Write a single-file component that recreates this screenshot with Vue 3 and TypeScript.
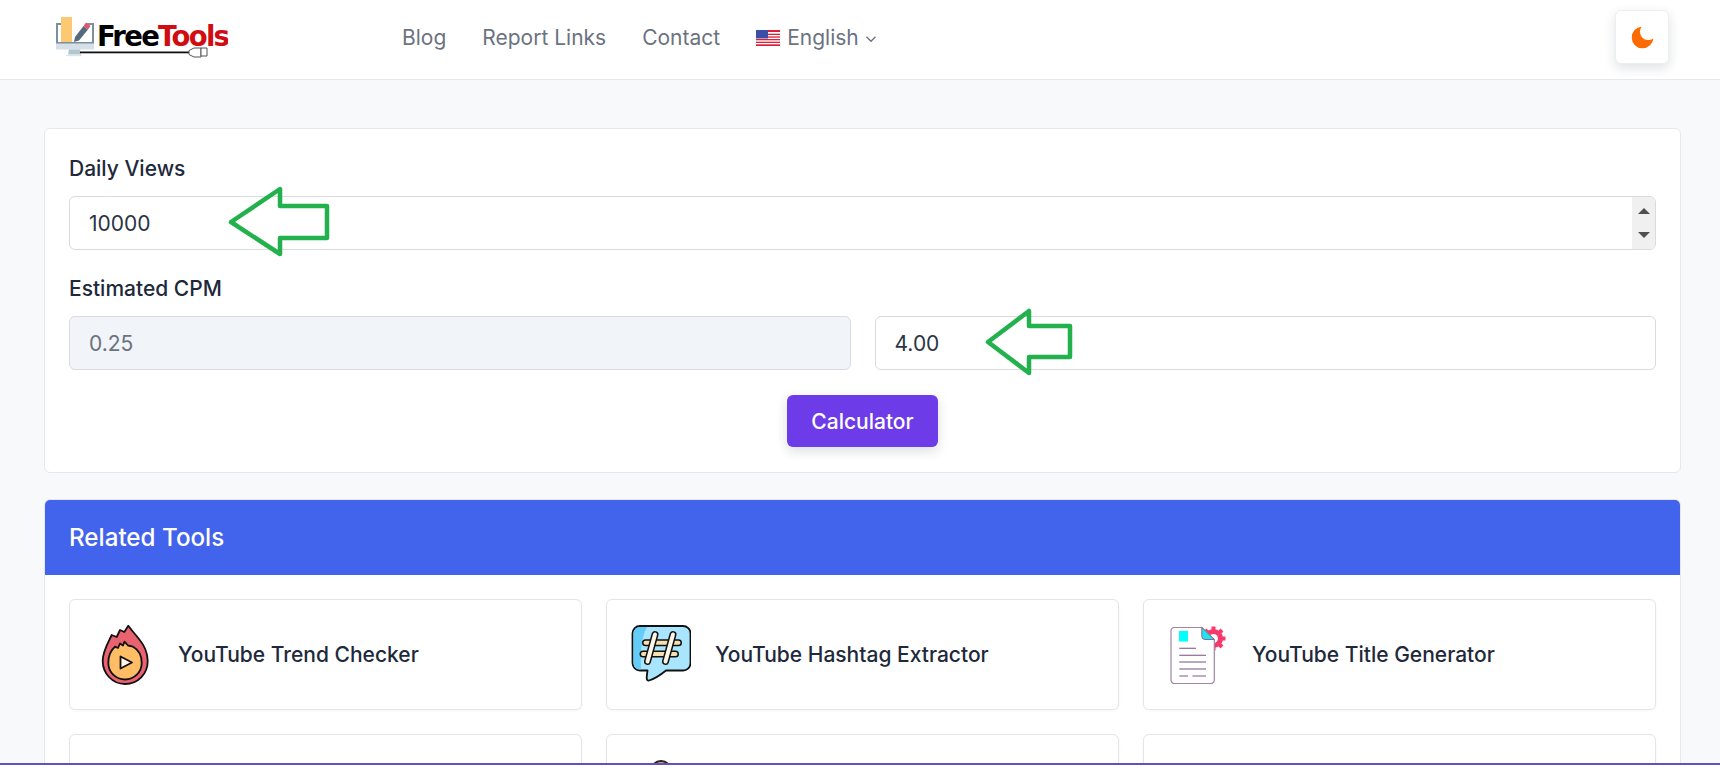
<script setup lang="ts">
const navLinks: string[] = ['Blog', 'Report Links', 'Contact']
</script>

<template>
  <div class="page">
    <header class="topbar">
      <a class="logo" aria-label="FreeTools">
        <svg width="172" height="50" viewBox="0 0 172 50">
          <!-- ruler -->
          <rect x="5" y="6" width="11" height="26" fill="#fdc872" />
          <!-- monitor -->
          <path d="M5 13H1V32H37V13H31" fill="none" stroke="#7c8f9f" stroke-width="2" />
          <rect x="0" y="32.500" width="38" height="6" fill="#d5e0e8" />
          <path d="M13 38.500h11l1 5H12z" fill="#b3c6cf" />
          <rect x="10" y="44" width="16" height="1.200" fill="#dbe4e9" />
          <!-- pencil -->
          <path d="M27.500 15l4.500 3.500-9 11-5 1.500 1-5z" fill="#566a7e" />
          <path d="M27.500 15l2.500-3.500 4.500 3.500-2.500 3.500z" fill="#e2566b" />
          <!-- wordmark -->
          <text x="41" y="35" class="word"><tspan fill="#000">Free</tspan><tspan fill="#d00d12">Tools</tspan></text>
          <!-- cable and plug -->
          <rect x="24" y="40.500" width="110" height="1.800" fill="#111" />
          <path d="M133 39.500l5-2.500h7v9h-7l-5-2.500z" fill="#fff" stroke="#555" stroke-width="1" />
          <path d="M145 37h6v8h-6z" fill="#fff" stroke="#555" stroke-width="1" />
        </svg>
      </a>

      <nav class="nav">
        <a v-for="link in navLinks" :key="link" class="nav-link">{{ link }}</a>
        <a class="nav-link lang">
          <svg class="flag" width="24" height="16" viewBox="0 0 24 16">
            <rect width="24" height="16" fill="#fff" />
            <g fill="#d9203a">
              <rect y="0" width="24" height="2" />
              <rect y="3.700" width="24" height="1.300" />
              <rect y="6.400" width="24" height="1.300" />
              <rect y="9" width="24" height="1.300" />
              <rect y="11.700" width="24" height="1.300" />
              <rect y="14.300" width="24" height="1.700" />
            </g>
            <rect width="12" height="8.500" fill="#3c4fa8" />
          </svg>
          <span>English</span>
          <svg class="chevron" width="12" height="8" viewBox="0 0 12 8">
            <path d="M1.500 1.800L6 6.200l4.500-4.400" fill="none" stroke="#6b7280" stroke-width="1.400" />
          </svg>
        </a>
      </nav>

      <button class="theme-btn" type="button" aria-label="Toggle theme">
        <svg width="29" height="29" viewBox="0 0 24 24">
          <path d="M21 12.790A9 9 0 1 1 11.210 3 7 7 0 0 0 21 12.790z" fill="#ff6a00" />
        </svg>
      </button>
    </header>

    <main class="content">
      <section class="card form-card">
        <label class="field-label">Daily Views</label>
        <div class="input-wrap">
          <input class="input" type="text" value="10000" readonly />
          <div class="spinner">
            <i class="tri up"></i>
            <i class="tri down"></i>
          </div>
          <svg class="arrow arrow-one" width="104" height="72" viewBox="0 0 104 72">
            <path d="M4 36L53 3V20H100V52H53V68z" />
          </svg>
        </div>

        <label class="field-label second">Estimated CPM</label>
        <div class="cpm-row">
          <input class="input disabled" type="text" value="0.25" disabled />
          <div class="input-wrap">
            <input class="input" type="text" value="4.00" readonly />
            <svg class="arrow arrow-two" width="90" height="68" viewBox="0 0 90 68">
              <path d="M4 34L45 3V18H86V49H45V65z" />
            </svg>
          </div>
        </div>

        <div class="actions">
          <button class="calc-btn" type="button">Calculator</button>
        </div>
      </section>

      <section class="card related">
        <div class="related-head">Related Tools</div>
        <div class="tools">
          <a class="tool">
            <svg class="tool-icon" viewBox="0 0 60 60">
              <path d="M31 59C18 59 8.700 48 8.700 36 8.700 26 14 18 17.700 10L22.700 12 26 5 30.300 7 34.300 .8C38 6 42 10 45 14 50 20 53.700 28 53.700 36 53.700 49 44 59 31 59z" fill="#e8636f" stroke="#111" stroke-width="1.800" stroke-linejoin="round" />
              <path d="M14.300 38C14.300 30 17 25 21 21.700L24 23 26 18.500 29 20.500 30.500 16.700 34 20.500 39 21.700C45 25 47.700 31 47.700 38A16.700 16.500 0 0 1 14.300 38z" fill="#ffbd66" stroke="#111" stroke-width="1.800" stroke-linejoin="round" />
              <path d="M26.500 31.500L38 37.500 26.500 43.500z" fill="#fff7ea" stroke="#111" stroke-width="1.800" stroke-linejoin="round" />
            </svg>
            <span>YouTube Trend Checker</span>
          </a>
          <a class="tool">
            <svg class="tool-icon" viewBox="0 0 60 60">
              <path d="M9 1H52A7.500 7.500 0 0 1 59.500 8.500V38A7.500 7.500 0 0 1 52 45.500H35C30 49.500 24 54 18 55.500 15 56 15.500 52 16.500 45.500H9A7.500 7.500 0 0 1 1.500 38V8.500A7.500 7.500 0 0 1 9 1z" fill="#a9e5ff" stroke="#111" stroke-width="1.800" stroke-linejoin="round" />
              <path d="M9.500 2H16C11 10 9 26 10 44.500H9A6.500 6.500 0 0 1 2.500 38V8.500A6.500 6.500 0 0 1 9.500 2z" fill="#63cdf8" />
              <g stroke-linecap="round" fill="none">
                <path d="M14.500 17.700H47.500M12 29H44.500" stroke="#111" stroke-width="7" />
                <path d="M14.500 17.700H47.500M12 29H44.500" stroke="#f7dfb0" stroke-width="4" />
                <path d="M24 9.500L16.500 36.500M42 9.500L34.500 36.500" stroke="#111" stroke-width="7" />
                <path d="M24 9.500L16.500 36.500M42 9.500L34.500 36.500" stroke="#fff6e6" stroke-width="4" />
              </g>
            </svg>
            <span>YouTube Hashtag Extractor</span>
          </a>
          <a class="tool">
            <svg class="tool-icon" viewBox="0 0 60 60">
              <g fill="#f8396b">
                <circle cx="45.500" cy="13.500" r="9.500" />
                <g stroke="#f8396b" stroke-width="4">
                  <path d="M45.500 1.500V25.500M33.500 13.500H57.500M37 5L54 22M54 5L37 22" />
                </g>
              </g>
              <circle cx="45.500" cy="13.500" r="4.500" fill="#fff" />
              <path d="M6 2.500H33.800L46.300 14.500V55A3.500 3.500 0 0 1 42.800 58.500H6.500A3.500 3.500 0 0 1 3 55V5.500A3 3 0 0 1 6 2.500z" fill="#fff" stroke="#a184a8" stroke-width="1.200" />
              <path d="M33.800 2.500L46.300 14.500H37A3.200 3.200 0 0 1 33.800 11.300z" fill="#19e6ee" stroke="#8a6a90" stroke-width="1" />
              <rect x="11" y="6" width="9" height="10.500" fill="#00ffff" />
              <g stroke="#75507e" stroke-width="1.100">
                <path d="M11.300 23.300H28M11.300 30.300H38M11.300 37H38M11.300 44H38" />
                <path d="M11.300 51H20M24.500 51H38" stroke="#ad8fb3" stroke-width="1.400" />
              </g>
            </svg>
            <span>YouTube Title Generator</span>
          </a>
          <a class="tool">
            <span class="icon-slot"></span>
          </a>
          <a class="tool">
            <span class="icon-slot"><i class="peek-round"></i></span>
          </a>
          <a class="tool">
            <span class="icon-slot"><i class="peek-flat"></i></span>
          </a>
        </div>
      </section>
    </main>
  </div>
</template>

<style scoped>
.page {
  height: 772px;
  overflow: hidden;
  background: #fff;
  font-family: Inter, "Liberation Sans", sans-serif;
  color: #1e293b;
}

.topbar {
  height: 79px;
  box-sizing: content-box;
  display: flex;
  align-items: center;
  padding: 0 51px 0 56px;
  background: #fff;
  border-bottom: 1px solid #e6e8ec;
}

.logo {
  display: block;
  width: 172px;
  height: 50px;
  margin-top: -7px;
}

.word {
  font-family: "DejaVu Sans", sans-serif;
  font-weight: 700;
  font-size: 27.500px;
  letter-spacing: -1.700px;
}

.nav {
  display: flex;
  align-items: center;
  gap: 36px;
  margin-left: 174px;
  margin-top: -4px;
}

.nav-link {
  font-size: 21px;
  color: #6b7280;
}

.lang {
  display: flex;
  align-items: center;
}

.flag {
  margin-right: 7px;
}

.chevron {
  margin-left: 6px;
  margin-top: 3px;
}

.theme-btn {
  width: 54px;
  height: 54px;
  margin-left: auto;
  margin-top: -5px;
  display: flex;
  align-items: center;
  justify-content: center;
  padding: 0;
  background: #fff;
  border: 1px solid #eceef1;
  border-radius: 6px;
  box-shadow: 0 4px 12px rgba(30, 41, 59, 0.14);
}

.content {
  height: 685px;
  box-sizing: border-box;
  padding: 48px 39px 0 44px;
  background: #f8f9fb;
  border-bottom: 2px solid #6251c4;
  overflow: hidden;
}

.card {
  background: #fff;
  border: 1px solid #e6e8ec;
  border-radius: 6px;
}

.form-card {
  height: 345px;
  box-sizing: border-box;
  padding: 24px 24px 0;
}

.field-label {
  display: block;
  height: 32px;
  line-height: 32px;
  margin-bottom: 11px;
  font-size: 21px;
  font-weight: 500;
}

.field-label.second {
  margin-top: 23px;
}

.input-wrap {
  position: relative;
}

.input {
  display: block;
  width: 100%;
  height: 54px;
  box-sizing: border-box;
  padding: 0 19px;
  font: 400 21px Inter, "Liberation Sans", sans-serif;
  color: #2b3445;
  background: #fff;
  border: 1px solid #d9dbdf;
  border-radius: 6px;
  outline: none;
}

.input.disabled {
  color: #6b7280;
  background: #f1f4f9;
}

.spinner {
  position: absolute;
  top: 1px;
  right: 1px;
  bottom: 1px;
  width: 23px;
  display: flex;
  flex-direction: column;
  align-items: center;
  justify-content: center;
  gap: 18px;
  background: #f0f0f0;
  border-radius: 0 5px 5px 0;
}

.tri {
  width: 0;
  height: 0;
  border-left: 6px solid transparent;
  border-right: 6px solid transparent;
}

.tri.up {
  border-bottom: 6px solid #505050;
}

.tri.down {
  border-top: 6px solid #505050;
}

.arrow {
  position: absolute;
  overflow: visible;
}

.arrow path {
  fill: none;
  stroke: #22b14c;
  stroke-width: 4.500;
  stroke-linejoin: round;
}

.arrow-one {
  left: 158px;
  top: -10px;
}

.arrow-two {
  left: 109px;
  top: -8px;
}

.cpm-row {
  display: grid;
  grid-template-columns: 1fr 1fr;
  gap: 24px;
}

.actions {
  display: flex;
  justify-content: center;
  margin-top: 25px;
}

.calc-btn {
  width: 151px;
  height: 52px;
  font: 500 21px Inter, "Liberation Sans", sans-serif;
  color: #fff;
  background: #6d3be8;
  border: none;
  border-radius: 6px;
  box-shadow: 0 4px 12px rgba(30, 41, 59, 0.16);
}

.related {
  margin-top: 26px;
  overflow: hidden;
}

.related-head {
  height: 75px;
  display: flex;
  align-items: center;
  padding: 0 24px;
  font-size: 24.200px;
  font-weight: 500;
  color: #fff;
  background: #4263eb;
}

.tools {
  display: grid;
  grid-template-columns: repeat(3, 1fr);
  gap: 24px;
  padding: 24px;
}

.tool {
  height: 111px;
  box-sizing: border-box;
  display: flex;
  align-items: center;
  gap: 24px;
  padding: 0 24px;
  font-size: 21px;
  font-weight: 500;
  background: #fff;
  border: 1px solid #e4e5e8;
  border-radius: 6px;
  box-shadow: 0 1px 3px rgba(30, 41, 59, 0.04);
}

.tool-icon {
  width: 60px;
  height: 60px;
  flex: none;
}

.icon-slot {
  position: relative;
  width: 60px;
  height: 60px;
  flex: none;
}

.peek-round {
  position: absolute;
  left: 19px;
  top: 0;
  width: 22px;
  height: 22px;
  box-sizing: border-box;
  background: #f2a65a;
  border: 2px solid #222;
  border-radius: 50%;
}

.peek-flat {
  position: absolute;
  left: 3px;
  top: 3px;
  width: 53px;
  height: 20px;
  background: #3d3a4a;
}
</style>
